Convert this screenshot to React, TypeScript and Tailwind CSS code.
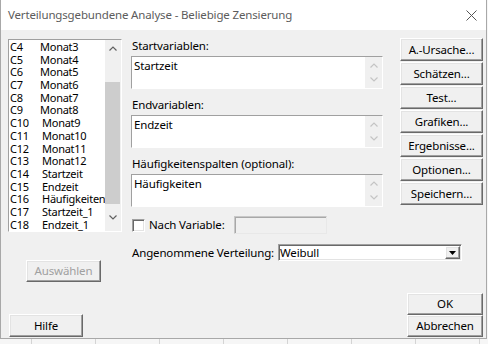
import React from "react";

const rows: [string, string][] = [
  ["C4", "Monat3"],
  ["C5", "Monat4"],
  ["C6", "Monat5"],
  ["C7", "Monat6"],
  ["C8", "Monat7"],
  ["C9", "Monat8"],
  ["C10", "Monat9"],
  ["C11", "Monat10"],
  ["C12", "Monat11"],
  ["C13", "Monat12"],
  ["C14", "Startzeit"],
  ["C15", "Endzeit"],
  ["C16", "Häufigkeiten"],
  ["C17", "Startzeit_1"],
  ["C18", "Endzeit_1"],
];

const sunken =
  "border border-t-[#a0a0a0] border-l-[#a0a0a0] border-r-white border-b-white shadow-[inset_1px_1px_0_#696969,inset_-1px_-1px_0_#e3e3e3]";
const raised =
  "border border-t-white border-l-white border-r-[#696969] border-b-[#696969] shadow-[inset_-1px_-1px_0_#a0a0a0,inset_1px_1px_0_#e3e3e3] bg-[#f0f0f0]";

function Chevron({ up, color }: { up: boolean; color: string }) {
  return (
    <svg width="8" height="5" viewBox="0 0 8 5">
      <path
        d={up ? "M0.5 4.5 L4 1 L7.5 4.5" : "M0.5 0.5 L4 4 L7.5 0.5"}
        fill="none"
        stroke={color}
        strokeWidth="1.2"
      />
    </svg>
  );
}

function Field({ value }: { value: string }) {
  return (
    <div className={`flex h-[33px] w-[252px] ${sunken}`}>
      <div className="flex-1 bg-white pl-[2px] pt-[2px] leading-[14px]">{value}</div>
      <div className="flex w-[17px] flex-col items-center justify-between bg-[#f0f0f0] py-[6px]">
        <Chevron up color="#c4c4c4" />
        <Chevron up={false} color="#c4c4c4" />
      </div>
    </div>
  );
}

function Btn({ label, cls }: { label: string; cls: string }) {
  return (
    <div className={`flex items-center justify-center leading-[14px] ${raised} ${cls}`}>{label}</div>
  );
}

export default function App() {
  const side = ["A.-Ursache...", "Schätzen...", "Test...", "Grafiken...", "Ergebnisse...", "Optionen...", "Speichern..."];
  return (
    <div className="relative h-[344px] w-[488px] overflow-hidden bg-[#f6f6f6] font-['Noto_Sans',sans-serif] text-[11.5px] tracking-[-0.15px] text-black">
      <div className="flex h-[339px] w-[487px] flex-col border-x border-b border-[#a8a8a8] bg-[#f0f0f0]">
        <div className="flex h-[30px] items-center justify-between bg-white pl-[7px] pr-[9px]">
          <span className="text-[#5c5c5c]">Verteilungsgebundene Analyse - Beliebige Zensierung</span>
          <svg width="11" height="11" viewBox="0 0 11 11">
            <path d="M0.5 0.5 L10.5 10.5 M10.5 0.5 L0.5 10.5" stroke="#555" strokeWidth="1" />
          </svg>
        </div>
        <div className="flex flex-1">
          {/* left column */}
          <div className="flex w-[121px] flex-col pl-[7px] pt-[9px]">
            <div className={`flex h-[193px] w-[114px] ${sunken}`}>
              <div className="min-w-0 flex-1 overflow-hidden bg-white pl-[1px] pt-[1px] text-[11px] tracking-[-0.25px]">
                {rows.map(([c, n]) => (
                  <div key={c} className="flex h-[12.7px] items-center whitespace-nowrap leading-[12.7px]">
                    <span className={c.length === 2 ? "w-[30px] shrink-0" : "w-[32px] shrink-0"}>{c}</span>
                    <span>{n}</span>
                  </div>
                ))}
              </div>
              <div className="flex w-[16px] shrink-0 flex-col bg-[#f0f0f0]">
                <div className="flex h-[17px] items-center justify-center">
                  <Chevron up color="#606060" />
                </div>
                <div className="mt-[25px] h-[122px] w-[15px] bg-[#cdcdcd]" />
                <div className="flex flex-1 items-center justify-center">
                  <Chevron up={false} color="#606060" />
                </div>
              </div>
            </div>
            <Btn label="Auswählen" cls="mt-[28px] ml-[18px] h-[22px] w-[75px] text-[#a0a0a0]" />
            <Btn label="Hilfe" cls="mt-[32px] ml-[1px] h-[23px] w-[74px] text-black" />
          </div>
          {/* middle column */}
          <div className="ml-[9px] flex w-[252px] flex-col">
            <div className="mt-[8px] h-[16px] pl-[1px] leading-[16px]">Startvariablen:</div>
            <div className="mt-[2px]">
              <Field value="Startzeit" />
            </div>
            <div className="mt-[8px] h-[16px] pl-[1px] leading-[16px]">Endvariablen:</div>
            <div className="mt-[2px]">
              <Field value="Endzeit" />
            </div>
            <div className="mt-[8px] h-[16px] pl-[1px] leading-[16px]">Häufigkeitenspalten (optional):</div>
            <div className="mt-[2px]">
              <Field value="Häufigkeiten" />
            </div>
            <div className="mt-[9px] flex h-[18px] items-center whitespace-nowrap">
              <div className={`ml-[1px] h-[13px] w-[13px] bg-white ${sunken}`} />
              <span className="ml-[4px] w-[85px]">Nach Variable:</span>
              <div className="h-[18px] w-[93px] border border-t-[#c8c8c8] border-l-[#c8c8c8] border-r-[#e8e8e8] border-b-[#e8e8e8] bg-[#f0f0f0] shadow-[inset_1px_1px_0_#a8a8a8]" />
            </div>
            <div className="mt-[10px] flex h-[17px] w-max items-center whitespace-nowrap">
              <span className="ml-[1px] w-[146px]">Angenommene Verteilung:</span>
              <div className={`flex h-[17px] w-[184px] items-center bg-white ${sunken}`}>
                <span className="flex-1 pl-[1px] leading-[14px]">Weibull</span>
                <div className={`mr-[1px] flex h-[13px] w-[15px] items-center justify-center ${raised}`}>
                  <svg width="7" height="4" viewBox="0 0 7 4">
                    <path d="M0 0 H7 L3.5 4 Z" fill="#000" />
                  </svg>
                </div>
              </div>
            </div>
          </div>
          {/* right column */}
          <div className="ml-[17px] flex w-[83px] flex-col pt-[8px] pb-[1px]">
            {side.map((s) => (
              <Btn key={s} label={s} cls="mb-[1px] h-[23px] w-[83px] text-black" />
            ))}
            <Btn label="OK" cls="mt-auto ml-[7px] h-[22px] w-[76px] text-black" />
            <Btn label="Abbrechen" cls="ml-[7px] h-[22px] w-[76px] text-black" />
          </div>
        </div>
      </div>
      <div className="flex h-[5px]">
        <div className="w-[32px] shrink-0 border-r border-[#d4d4d4]" />
        {[0, 1, 2, 3, 4, 5, 6].map((i) => (
          <div key={i} className="w-[64px] shrink-0 border-r border-[#d4d4d4]" />
        ))}
      </div>
    </div>
  );
}
